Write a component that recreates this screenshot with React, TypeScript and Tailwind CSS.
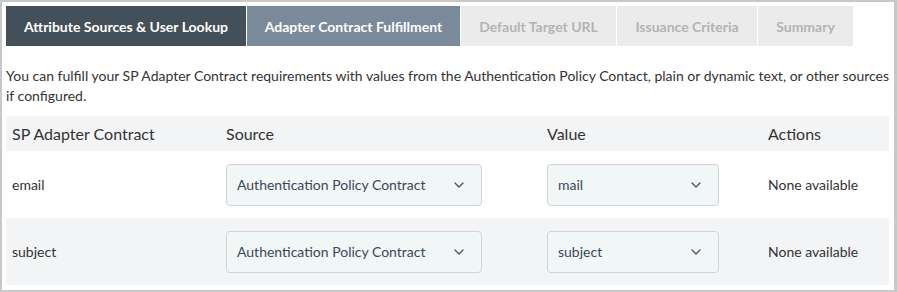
import { ChevronDown } from "lucide-react";

const tabs = [
  { label: "Attribute Sources & User Lookup", w: "w-[240px]", cls: "bg-[#434f59] text-white" },
  { label: "Adapter Contract Fulfillment", w: "w-[213px]", cls: "bg-[#7b8a9b] text-white" },
  { label: "Default Target URL", w: "w-[155px]", cls: "bg-[#ebebeb] text-[#b4b4b4]" },
  { label: "Issuance Criteria", w: "w-[140px]", cls: "bg-[#ebebeb] text-[#b4b4b4]" },
  { label: "Summary", w: "w-[95px]", cls: "bg-[#ebebeb] text-[#b4b4b4]" },
];

const rows = [
  { name: "email", source: "Authentication Policy Contract", value: "mail", bg: "bg-white" },
  { name: "subject", source: "Authentication Policy Contract", value: "subject", bg: "bg-[#f3f4f5]" },
];

function Select({ text, w }: { text: string; w: string }) {
  return (
    <div
      className={`${w} flex h-[42px] items-center justify-between rounded-[4px] border border-[#cfd4d6] bg-[#f1f6f7] pl-[10px] pr-[14px] text-[14px] text-[#3c4858]`}
    >
      <span>{text}</span>
      <ChevronDown className="h-4 w-4 text-[#4a5565]" strokeWidth={2} />
    </div>
  );
}

export default function App() {
  return (
    <div
      className="h-[292px] w-[897px] border-2 border-r-[3px] border-[#c8c8c8] bg-white p-[4px] text-[#333]"
      style={{ fontFamily: "Lato, 'Open Sans', sans-serif" }}
    >
      <div className="flex gap-px">
        {tabs.map((t) => (
          <div
            key={t.label}
            className={`${t.w} ${t.cls} flex h-[40px] items-center justify-center text-[14px] font-bold`}
          >
            {t.label}
          </div>
        ))}
      </div>

      <p className="mt-[20px] text-[14px] leading-[20px] text-[#333]">
        You can fulfill your SP Adapter Contract requirements with values from the Authentication Policy
        Contact, plain or dynamic text, or other sources if configured.
      </p>

      <div className="mt-[10px] mr-[1px]">
        <div className="flex h-[35px] items-center bg-[#f3f4f5] text-[16px] text-[#333]">
          <div className="w-[214px] pl-[6px]">SP Adapter Contract</div>
          <div className="w-[321px] pl-[6px]">Source</div>
          <div className="w-[221px] pl-[6px]">Value</div>
          <div className="pl-[6px]">Actions</div>
        </div>
        {rows.map((r) => (
          <div key={r.name} className={`${r.bg} flex h-[67px] items-center text-[14px]`}>
            <div className="w-[214px] pl-[6px]">{r.name}</div>
            <div className="w-[321px] pl-[6px]">
              <Select text={r.source} w="w-[256px]" />
            </div>
            <div className="w-[221px] pl-[6px]">
              <Select text={r.value} w="w-[172px]" />
            </div>
            <div className="pl-[6px]">None available</div>
          </div>
        ))}
      </div>
    </div>
  );
}
